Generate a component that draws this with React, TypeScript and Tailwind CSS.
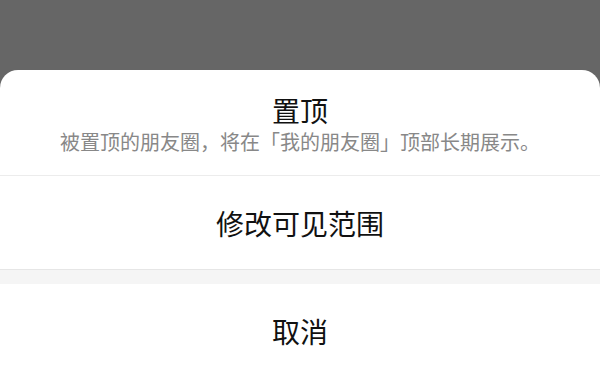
import React from "react";

const FONT = { fontFamily: '"Noto Sans CJK SC", "Noto Sans", sans-serif' };

export default function App() {
  return (
    <div className="w-[600px] h-[377px] overflow-hidden bg-[#666666] flex flex-col" style={FONT}>
      {/* dimmed page above the sheet */}
      <div className="h-[70px] shrink-0" />

      {/* ACTION SHEET */}
      <div className="flex-1 bg-white rounded-t-[18px] flex flex-col">
        <div className="pt-[22px] pb-[19px] text-center">
          <h3 className="text-[28px] leading-[36px] text-[#111111]">置顶</h3>
          <p className="text-[20px] leading-[28px] text-[#888888]">
            被置顶的朋友圈，将在「我的朋友圈」顶部长期展示。
          </p>
        </div>

        <div className="h-px bg-[#ececec]" />

        <button className="h-[93px] shrink-0 flex items-center justify-center text-[28px] text-[#111111]">
          修改可见范围
        </button>

        <div className="h-[15px] shrink-0 bg-[#f5f5f5] border-t border-[#e6e6e6]" />

        <button className="h-[93px] shrink-0 flex items-center justify-center text-[28px] text-[#111111]">
          取消
        </button>
      </div>
    </div>
  );
}
